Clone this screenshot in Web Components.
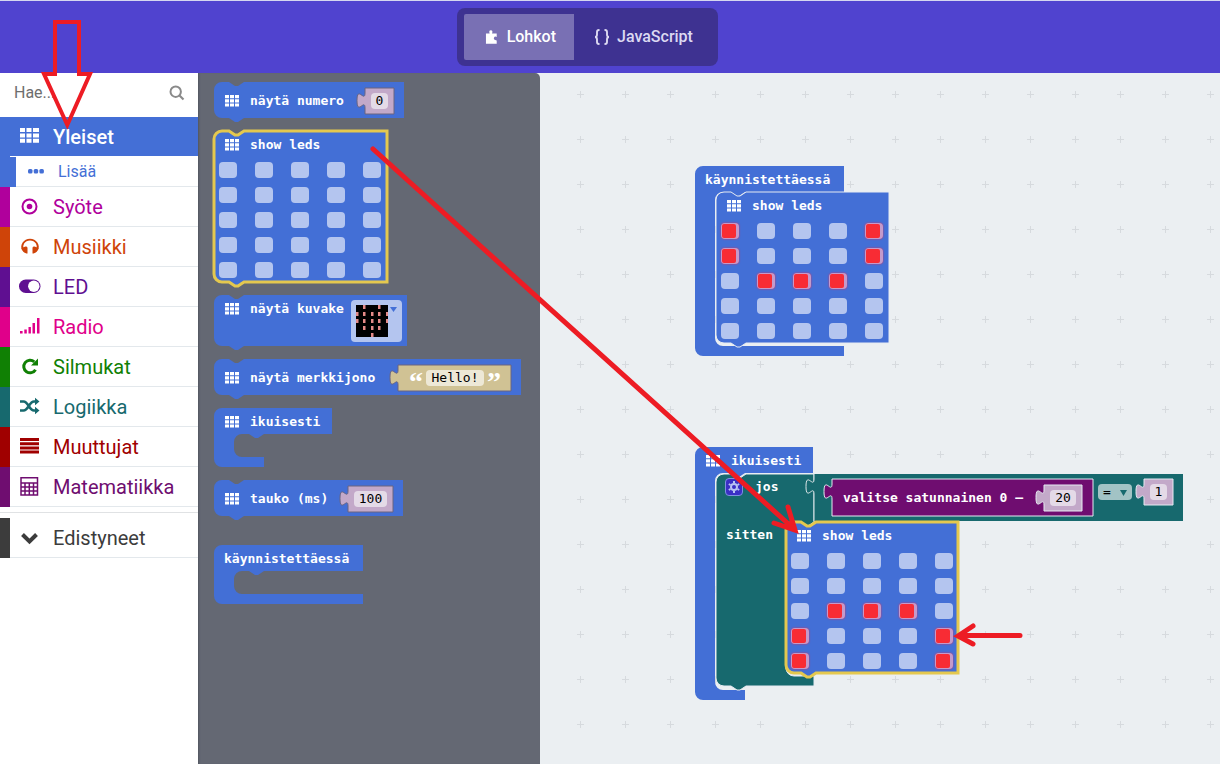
<!DOCTYPE html>
<html lang="fi">
<head>
<meta charset="utf-8">
<title>MakeCode – Lohkot</title>
<style>
html, body { margin: 0; height: 100%; }
body { font-family: Roboto, "Noto Sans", sans-serif; overflow: hidden; }
</style>
</head>
<body>
<pxt-app></pxt-app>

<script>
const GRID = `<svg class="gi" viewBox="0 0 14 12" width="14" height="12" aria-hidden="true"><path fill="currentColor" d="M0 0h4v3.2H0zM5 0h4v3.2H5zM10 0h4v3.2h-4zM0 4.2h4v3.2H0zM5 4.2h4v3.2H5zM10 4.2h4v3.2h-4zM0 8.4h4v3.2H0zM5 8.4h4v3.2H5zM10 8.4h4v3.2h-4z"/></svg>`;

class Part extends HTMLElement {
  connectedCallback() {
    if (this.shadowRoot) return;
    this.attachShadow({ mode: 'open' }).innerHTML = this.render();
  }
}

/* Outlines of the puzzle-like blocks */
const shapes = {
  stack: (w, h) => `M0,8 A8,8 0 0 1 8,0 H15 l6,4 3,0 6,-4 H${w} V${h} H30 l-6,4 -3,0 -6,-4 H8 A8,8 0 0 1 0,${h - 8} Z`,
  value: (w, h) => `M0,0 H${w} V${h} H0 V20 c0,-10 -8,8 -8,-7.5 s8,2.5 8,-7.5 Z`,
  wrap: (w, h, foot) => `M0,8 A8,8 0 0 1 8,0 H${w} V26 H50 l-6,4 -3,0 -6,-4 H28 a8,8 0 0 0 -8,8 V${h - 18} a8,8 0 0 0 8,8 H${foot} V${h} H8 A8,8 0 0 1 0,${h - 8} Z`,
  cond: (w, h, foot) => `M0,9 A8,8 0 0 1 8,1 H15 l6,4 3,0 6,-4 H${w} V49 l-6,4 -3,0 -6,-4 H78 a8,8 0 0 0 -8,8 V${h - 18} a8,8 0 0 0 8,8 H${foot} V${h} H30 l-6,4 -3,0 -6,-4 H8 A8,8 0 0 1 0,${h - 8} Z`
};

customElements.define('code-block', class extends Part {
  render() {
    const a = n => this.getAttribute(n);
    const w = +a('w'), h = +a('h'), kind = a('kind');
    const d = shapes[kind](w, h, +(a('foot') || w));
    const edge = this.hasAttribute('edge')
      ? `<path d="M0,${h} V20 c0,-10 -8,8 -8,-7.5 s8,2.5 8,-7.5 V0" fill="none" class="line"/>` : '';
    return `<style>
      :host { display: block; position: relative; flex: none; width: ${w}px; height: ${h}px; color: #fff;
        font: bold 13px/26px "DejaVu Sans Mono", monospace; --line: none; --lw: 1px; }
      :host([tone="blue"]) { --fill: #436fd6; }
      :host([tone="pink"]) { --fill: #c3a9c9; }
      :host([tone="sand"]) { --fill: #d0c294; }
      :host([tone="teal"]) { --fill: #17696e; }
      :host([tone="plum"]) { --fill: #6f0d70; }
      :host([rim="light"]) { --line: #e6ebf2; }
      :host([rim="dark"]) { --line: #6a6580; }
      :host([rim="selected"]) { --line: #e4c84f; --lw: 3px; }
      svg { position: absolute; inset: 0; width: 100%; height: 100%; overflow: visible; }
      .shape { fill: var(--fill); stroke: var(--line); stroke-width: var(--lw); }
      .line { stroke: #dfe8ea; }
      .head { position: relative; display: flex; align-items: center; box-sizing: border-box;
        height: 26px; padding: 2px 10px 0 11px; white-space: nowrap; }
      :host([head="full"]) .head { height: 100%; }
      :host([head="top"]) .head { height: 100%; align-items: flex-start; padding-top: 1px; }
      :host([kind="value"]) .head { padding: 0 6px; }
      :host([pad="wide"]) .head { padding: 0 11px; }
      :host([pad="compare"]) .head { padding: 5px 10px 0 18px; }
      :host([kind="wrap"]) .head { padding-left: 10px; }
      :host([kind="cond"]) .head { height: 49px; align-items: flex-start; padding: 1px 0 0 9px; }
      .body { position: relative; }
      :host([kind="wrap"]) .body { padding-left: 21px; }
      </style>
      <svg aria-hidden="true"><path class="shape" d="${d}"/>${edge}</svg>
      <div class="head"><slot></slot></div><div class="body"><slot name="body"></slot></div>`;
  }
});

customElements.define('led-matrix', class extends Part {
  render() {
    const lit = (this.getAttribute('lit') || '').split(' ');
    let cells = '';
    for (let i = 0; i < 25; i++)
      cells += `<input type="checkbox" aria-label="LED ${i % 5}, ${Math.floor(i / 5)}"${lit.includes(String(i)) ? ' checked' : ''}>`;
    return `<style>
      :host { display: grid; grid-template-columns: repeat(5, 18px); gap: 9px 18px; padding: 5px 0 0 5px; }
      input { appearance: none; margin: 0; width: 18px; height: 16px; border-radius: 4px; background: #b4c5ef; }
      input:checked { background: #c49acb; box-shadow: 0 0 2px 0 #e0305a; }
      input:checked::before { content: ""; display: block; width: 14px; height: 14px; margin: 1px; border-radius: 2px; background: #f82c34; }
      </style>${cells}`;
  }
});

const blockCss = `
  .gi { flex: none; margin-right: 11px; }
  [kind="wrap"] > .gi { margin-left: 1px; }
  [head="top"] > .gi { margin-top: 7px; }
  .push { margin-left: auto; }
  input.f { box-sizing: border-box; width: 100%; height: 16px; padding: 0; border: 0; border-radius: 4px;
    background: #e4dae7; color: #000; text-align: center; font: 13px/16px "DejaVu Sans Mono", monospace; }
`;

const icons = {
  grid: `<path fill="currentColor" d="M1 2h5v4H1zM7.500 2h5v4h-5zM14 2h6v4h-6zM1 7.400h5v4H1zM7.500 7.400h5v4h-5zM14 7.400h6v4h-6zM1 12.800h5v4H1zM7.500 12.800h5v4h-5zM14 12.800h6v4h-6z" transform="translate(-1 -1)"/>`,
  dots: `<g fill="currentColor"><rect x="2" y="7" width="4.500" height="4.500" rx="1.500"/><rect x="7.700" y="7" width="4.500" height="4.500" rx="1.500"/><rect x="13.400" y="7" width="4.500" height="4.500" rx="1.500"/></g>`,
  target: `<circle cx="9.500" cy="9.500" r="7" fill="none" stroke="currentColor" stroke-width="2"/><circle cx="9.500" cy="9.500" r="2.800" fill="currentColor"/>`,
  phones: `<path d="M3 13A7.800 7.200 0 1 1 17 13" fill="none" stroke="currentColor" stroke-width="1.800"/><path fill="currentColor" d="M1.500 11l4-1.500q2-.5 2 1.500v5.500H6.500q-4-1-5-5.500zM18.500 11l-4-1.500q-2-.5-2 1.500v5.500h1q4-1 5-5.500z"/>`,
  toggle: `<rect x="-1" y="2.500" width="21.500" height="13.500" rx="6.750" fill="currentColor"/><circle cx="13.800" cy="9.200" r="5.700" fill="#fff"/>`,
  signal: `<path fill="currentColor" d="M0 15h2.600v2.500H0zM4.300 13.500h2.500v4H4.300zM8.500 11h2.400v6.500H8.500zM12.500 7h2.500v10.500h-2.500zM17 2h2.500v15.500H17z" transform="translate(0 -1)"/>`,
  redo: `<path d="M15.500 12.700A6.300 6.300 0 1 1 14.300 4.800" fill="none" stroke="currentColor" stroke-width="3"/><path fill="currentColor" d="M18 1.500v7h-7z"/>`,
  shuffle: `<path d="M0 4.500h3.500C8.500 4.500 9 13.500 14 13.500h2.500M0 13.500h3.500C8.500 13.500 9 4.500 14 4.500h2.500" fill="none" stroke="currentColor" stroke-width="2.600"/><path fill="currentColor" d="M15 .7l4.500 3.800L15 8.300zM15 9.700l4.500 3.800-4.500 3.800z"/>`,
  lines: `<path fill="currentColor" d="M0 1h19v3H0zM0 5.200h19v3H0zM0 9.400h19v3H0zM0 13.600h19v3H0z"/>`,
  calc: `<path d="M1 .7h16.500V18H1zM1 6h16.500M1 10h16.500M1 14h16.500M5 6v12M9.300 6v12M13.500 6v12" fill="none" stroke="currentColor" stroke-width="1.500"/>`,
  chevron: `<path d="M2.500 6.500l7 7 7-7" fill="none" stroke="currentColor" stroke-width="4"/>`
};

customElements.define('toolbox-item', class extends Part {
  render() {
    return `<style>
      :host { display: block; --c: #446fd6; }
      button { display: flex; align-items: center; gap: 13px; box-sizing: border-box; width: 100%; height: 40px; margin: 0;
        padding: 0 0 0 10px; border: 0; border-left: 10px solid var(--c); color: var(--c); font: 20px/24px Roboto, sans-serif;
        text-align: left; cursor: pointer; background: #fff; box-shadow: inset 0 -1px #e3e8ec; }
      svg { flex: none; overflow: visible; }
      :host([active]) button { background: var(--c); color: #fff; font-weight: 500; box-shadow: inset 0 -1px #fff; }
      :host([sub]) button { height: 30px; border-left-width: 16px; padding-left: 10px; gap: 12px; font-size: 16px; }
      </style>
      <button type="button"><svg width="20" height="20" viewBox="0 0 20 20" aria-hidden="true">${icons[this.getAttribute('icon')]}</svg><slot></slot></button>`;
  }
});

customElements.define('pxt-toolbox', class extends Part {
  render() {
    const item = (icon, c, t) => `<toolbox-item role="listitem" icon="${icon}" style="--c:${c}">${t}</toolbox-item>`;
    return `<style>
      :host { display: block; width: 198px; flex: none; background: #fff; }
      label { display: flex; align-items: center; height: 44px; padding: 0 13px 4px 14px; box-sizing: border-box; color: #8a8a8a; }
      label input { flex: 1; min-width: 0; border: 0; padding: 0; background: none; outline: 0; font: 16px/20px Roboto, sans-serif; color: #666; }
      label input::placeholder { color: #6e6e6e; opacity: 1; }
      hr { margin: 5px 0; border: 0; height: 1px; background: #e0e2e4; }
      </style>
      <label><input type="text" placeholder="Hae..." aria-label="Hae"><svg width="16" height="16" viewBox="0 0 16 16" aria-hidden="true"><circle cx="6.700" cy="6.700" r="5.200" fill="none" stroke="currentColor" stroke-width="2"/><path d="M10.500 10.500l4 4" stroke="currentColor" stroke-width="2.200"/></svg></label>
      <div role="list">
      <toolbox-item role="listitem" icon="grid" active>Yleiset</toolbox-item>
      <toolbox-item role="listitem" icon="dots" sub>Lisää</toolbox-item>
      ${item('target', '#b0009c', 'Syöte')}${item('phones', '#cf4409', 'Musiikki')}${item('toggle', '#5f0f91', 'LED')}
      ${item('signal', '#e0008a', 'Radio')}${item('redo', '#108004', 'Silmukat')}${item('shuffle', '#17696e', 'Logiikka')}
      ${item('lines', '#a00000', 'Muuttujat')}${item('calc', '#6f0d70', 'Matematiikka')}
      <hr>${item('chevron', '#3c3c3c', 'Edistyneet')}
      </div>`;
  }
});

customElements.define('pxt-header', class extends Part {
  render() {
    return `<style>
      :host { display: flex; flex: none; box-sizing: border-box; height: 73px; padding: 7px 0 0 457px; border-top: 1px solid #d5d6f0; background: #5043cf; }
      nav { display: flex; box-sizing: border-box; height: 58px; width: 261px; padding: 6px 7px; border-radius: 8px; background: #3e3291; }
      button { display: flex; align-items: center; gap: 7px; border: 0; padding: 0 18px 0 20px; background: none; color: #dcd9f2; font: 500 16px/20px Roboto, sans-serif; white-space: nowrap; }
      button.on { width: 110px; background: #7970b4; color: #fff; border-radius: 2px 0 0 2px; }
      </style>
      <nav>
        <button type="button" class="on"><svg width="16" height="16" viewBox="0 0 16 16" aria-hidden="true"><path fill="currentColor" d="M2 4.500h3.800Q4.600 1 7 1t1.200 3.500H13V8q-2-1.300-2.800.8T13 11.500V15H2z"/></svg>Lohkot</button>
        <button type="button"><svg width="16" height="18" viewBox="0 0 16 18" aria-hidden="true"><path d="M5.500 2H5Q3 2 3 4v2.500Q3 9 1 9q2 0 2 2.500V14q0 2 2 2h.5M10.500 2h.5q2 0 2 2v2.500Q13 9 15 9q-2 0-2 2.500V14q0 2-2 2h-.5" fill="none" stroke="currentColor" stroke-width="1.900"/></svg>JavaScript</button>
      </nav>`;
  }
});

customElements.define('pxt-flyout', class extends Part {
  render() {
    let dots = '';
    [' # # ', '#####', '#####', ' ### ', '  #  '].forEach((r, y) => [...r].forEach((c, x) => {
      if (c === '#') dots += `<rect x="${[0, 7, 15, 22, 30][x]}" y="${[0, 7, 14, 21, 28][y]}" width="2.500" height="4" fill="#e58a88"/>`;
    }));
    return `<style>${blockCss}
      :host { display: flex; flex-direction: column; gap: 13px; width: 342px; flex: none; box-sizing: border-box; padding: 9px 0 0 16px;
        background: #646873; border-radius: 0 5px 0 0; box-shadow: inset 2px 0 2px -1px #52565f; }
      .pic { display: flex; align-items: flex-start; gap: 2px; box-sizing: border-box; width: 51px; height: 42px; padding: 5px; margin: 4px -5px 0 auto; border: 0; border-radius: 4px; background: #b4c5ef; }
      svg { flex: none; }
      .q { font: bold 28px/28px "Liberation Serif", serif; height: 20px; }
      input.s { background: #ede8d6; width: 58px; flex: none; margin: 0 3px; }
      .last { margin-top: 16px; }
      </style>
      <code-block kind="stack" tone="blue" head="full" w="190" h="36">${GRID}<span>näytä numero</span>
        <code-block class="push" kind="value" tone="pink" rim="dark" head="full" w="29" h="26"><input class="f" value="0" aria-label="numero"></code-block></code-block>
      <code-block kind="stack" tone="blue" rim="selected" w="173" h="151">${GRID}<span>show leds</span><led-matrix slot="body"></led-matrix></code-block>
      <code-block kind="stack" tone="blue" head="top" w="193" h="51">${GRID}<span>näytä kuvake</span>
        <button class="pic" type="button" aria-label="kuvake"><svg width="32" height="32"><rect width="32" height="32"/>${dots}</svg><svg width="7" height="8"><path d="M0 2h7L3.500 7z" fill="#436fd6"/></svg></button></code-block>
      <code-block kind="stack" tone="blue" head="full" w="307" h="36">${GRID}<span>näytä merkkijono</span>
        <code-block class="push" kind="value" tone="sand" rim="dark" head="full" pad="wide" w="113" h="26"><span class="q">“</span><input class="f s" value="Hello!" aria-label="merkkijono"><span class="q">”</span></code-block></code-block>
      <code-block kind="wrap" tone="blue" w="118" h="59" foot="50">${GRID}<span>ikuisesti</span></code-block>
      <code-block kind="stack" tone="blue" head="full" w="189" h="36">${GRID}<span>tauko (ms)</span>
        <code-block class="push" kind="value" tone="pink" rim="dark" head="full" w="45" h="26"><input class="f" value="100" aria-label="ms"></code-block></code-block>
      <code-block class="last" kind="wrap" tone="blue" w="149" h="59"><span>käynnistettäessä</span></code-block>`;
  }
});

customElements.define('pxt-workspace', class extends Part {
  render() {
    return `<style>${blockCss}
      :host { display: block; position: relative; flex: 1; min-width: 0; overflow: hidden; background: #ebeff2; }
      .paper { position: absolute; inset: 0; width: 100%; height: 100%; }
      .start, .loop { position: absolute; left: 155px; }
      .start { top: 93px; }
      .loop { top: 374px; }
      .gear { flex: none; display: grid; place-items: center; width: 18px; height: 18px; padding: 0; margin: 4px 12px 0 0; border: 1px solid #7f8fe0; border-radius: 4px; background: #3a2fc4; box-sizing: border-box; }
      .jos { flex: none; width: 59px; }
      .if-row { display: flex; padding-left: 10px; }
      .if-row span { flex: none; }
      .if-row > span { width: 60px; }
      .op { display: grid; flex: none; align-items: center; width: 34px; height: 16px; margin: 5px 12px 0 5px; border-radius: 4px; background: #a2c3c5; }
      .op select, .op svg { grid-area: 1 / 1; }
      .op select { appearance: none; width: 100%; height: 16px; border: 0; padding: 0 0 0 5px; margin: 0; background: none; color: #000; font: 13px/16px "DejaVu Sans Mono", monospace; }
      .op svg { justify-self: end; margin-right: 5px; pointer-events: none; }
      </style>
      <svg class="paper" aria-hidden="true"><defs><pattern id="g" x="18" y="-1" width="45" height="45" patternUnits="userSpaceOnUse"><path d="M19 22.500h7M22.500 19v7" stroke="#d6dade" fill="none"/></pattern></defs><rect width="100%" height="100%" fill="url(#g)"/></svg>
      <code-block class="start" kind="wrap" tone="blue" w="149" h="190"><span>käynnistettäessä</span>
        <code-block slot="body" kind="stack" tone="blue" rim="light" w="173" h="151">${GRID}<span>show leds</span><led-matrix slot="body" lit="0 4 5 9 11 12 13"></led-matrix></code-block>
      </code-block>
      <code-block class="loop" kind="wrap" tone="blue" w="118" h="253" foot="50">${GRID}<span>ikuisesti</span>
        <code-block slot="body" kind="cond" tone="teal" rim="light" w="98" h="213">
          <button class="gear" type="button" aria-label="Asetukset"><svg width="12" height="12" viewBox="0 0 12 12"><circle cx="6" cy="6" r="3" fill="none" stroke="#b9c4f2" stroke-width="2"/><path d="M6 0v2M6 10v2M.8 3l1.700 1M9.500 8l1.700 1M.8 9l1.700-1M9.500 4l1.700-1" stroke="#b9c4f2" stroke-width="2"/></svg></button><span class="jos">jos</span>
          <code-block kind="value" tone="teal" edge head="top" pad="compare" w="369" h="47"><code-block kind="value" tone="plum" rim="light" head="full" pad="wide" w="261" h="37"><span>valitse satunnainen 0 –</span><code-block class="push" kind="value" tone="pink" rim="light" head="full" w="38" h="26"><input class="f" value="20" aria-label="yläraja"></code-block></code-block><span class="op"><select aria-label="vertailu"><option>=</option></select><svg width="7" height="7"><path d="M0 1h7L3.500 7z" fill="#17696e"/></svg></span><code-block kind="value" tone="pink" rim="light" head="full" w="29" h="26"><input class="f" value="1" aria-label="arvo"></code-block></code-block>
          <div slot="body" class="if-row"><span>sitten</span><code-block kind="stack" tone="blue" rim="selected" w="172" h="151">${GRID}<span>show leds</span><led-matrix slot="body" lit="11 12 13 15 19 20 24"></led-matrix></code-block></div>
        </code-block>
      </code-block>`;
  }
});

/* Hand-drawn guide arrows laid over the editor */
customElements.define('guide-arrows', class extends Part {
  render() {
    return `<style>:host { position: absolute; left: 0; top: 0; pointer-events: none; } svg { display: block; overflow: visible; }</style>
      <svg width="1" height="1" fill="none" stroke="#ed1c24" stroke-linecap="round" aria-hidden="true">
        <path stroke-width="4" d="M55 22H79V74H90L67.300 125 44 74H55Z"/>
        <path stroke-width="5" d="M373 149L794 529M788 507L795 530 774 523"/>
        <path stroke-width="5" d="M1020 635.500H959M973 626L958 636 973 644"/>
      </svg>`;
  }
});

customElements.define('pxt-app', class extends Part {
  render() {
    return `<style>
      :host { display: flex; flex-direction: column; height: 100vh; position: relative; }
      main { display: flex; flex: 1; min-height: 0; background: #ebeff2; }
      </style>
      <pxt-header></pxt-header>
      <main><pxt-toolbox></pxt-toolbox><pxt-flyout></pxt-flyout><pxt-workspace></pxt-workspace></main>
      <guide-arrows></guide-arrows>`;
  }
});
</script>
</body>
</html>
